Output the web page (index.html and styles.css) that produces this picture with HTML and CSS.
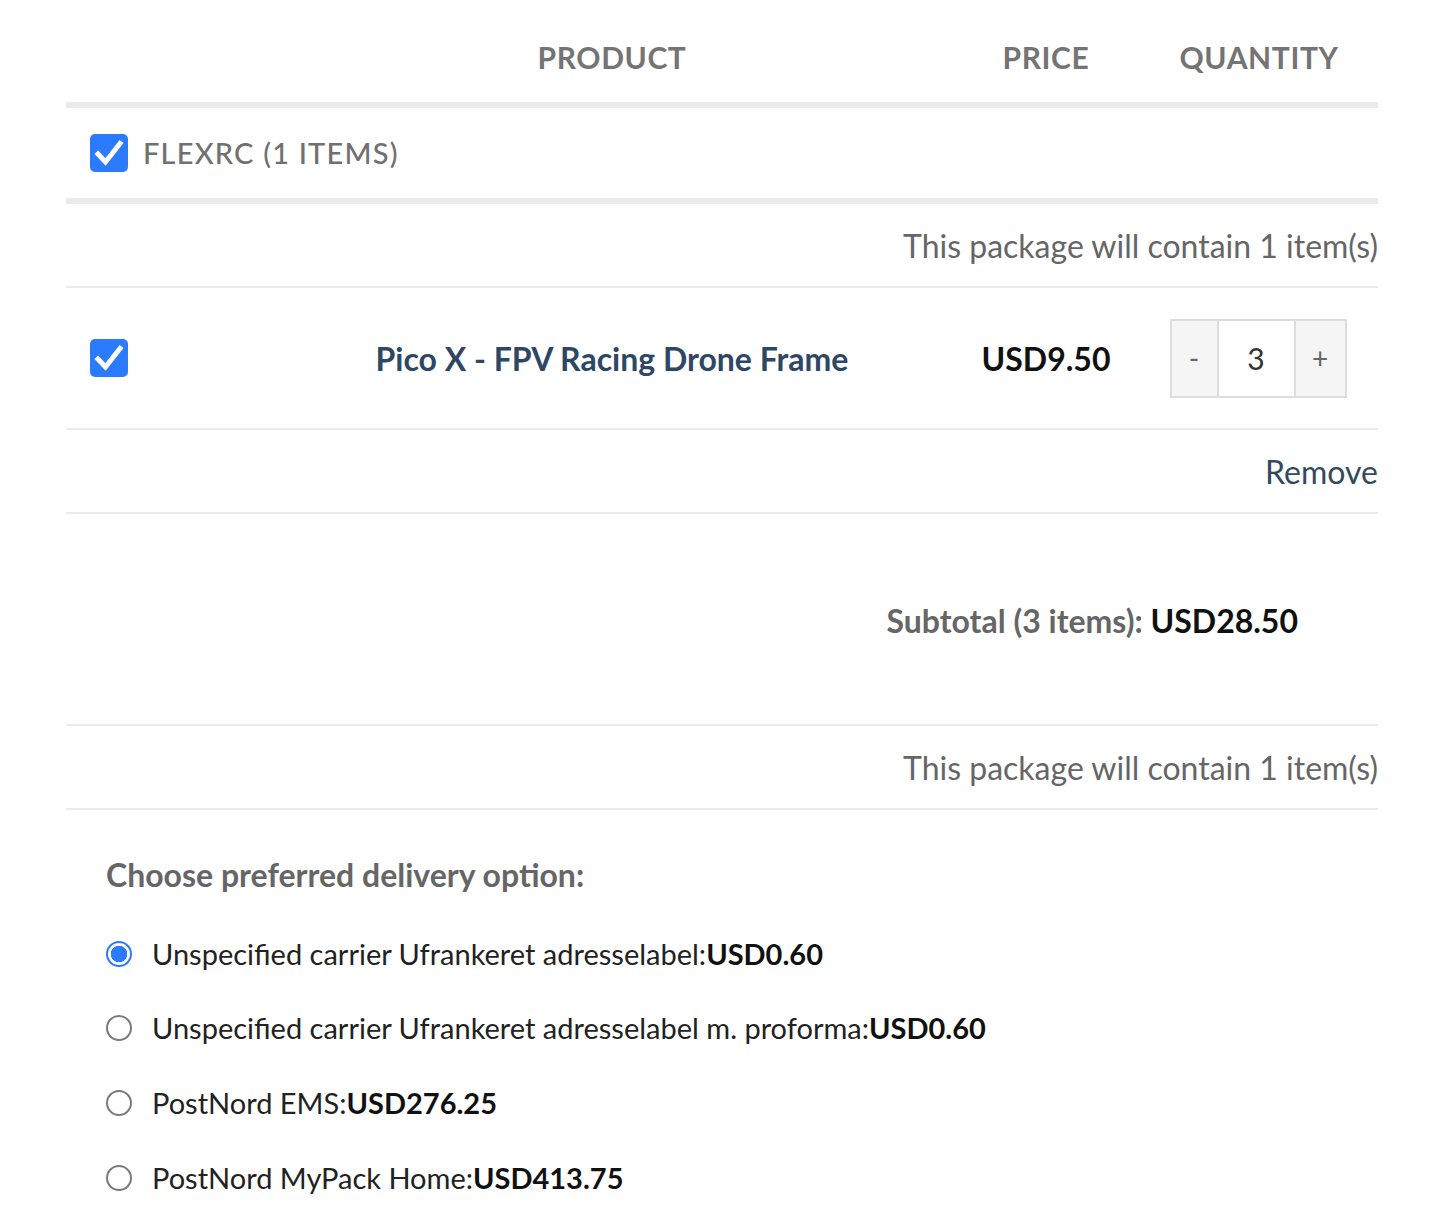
FILE: index.html
```html
<!DOCTYPE html>
<html lang="en">
<head>
<meta charset="utf-8">
<title>Cart</title>
<link rel="stylesheet" href="styles.css">
</head>
<body>
<div class="cart">
  <div class="grid head">
    <div></div>
    <div class="col-center">PRODUCT</div>
    <div class="col-center">PRICE</div>
    <div class="col-center">QUANTITY</div>
  </div>

  <div class="group">
    <span class="check">
      <svg viewBox="0 0 38 38" width="38" height="38"><rect x="0" y="0" width="38" height="38" rx="5" fill="#2a7bff"/><path d="M8 20 L15.5 28 L30 9.5" fill="none" stroke="#fff" stroke-width="5" stroke-linecap="square" stroke-linejoin="miter"/></svg>
    </span>
    <span class="group-name">FLEXRC (1 ITEMS)</span>
  </div>

  <div class="row-right pkg">This package will contain 1 item(s)</div>

  <div class="grid item">
    <div class="item-check">
      <span class="check">
        <svg viewBox="0 0 38 38" width="38" height="38"><rect x="0" y="0" width="38" height="38" rx="5" fill="#2a7bff"/><path d="M8 20 L15.5 28 L30 9.5" fill="none" stroke="#fff" stroke-width="5" stroke-linecap="square" stroke-linejoin="miter"/></svg>
      </span>
    </div>
    <div class="col-center name">Pico X - FPV Racing Drone Frame</div>
    <div class="col-center price">USD9.50</div>
    <div class="col-center">
      <div class="qty">
        <span class="qbtn">-</span>
        <span class="qval">3</span>
        <span class="qbtn qplus">+</span>
      </div>
    </div>
  </div>

  <div class="row-right remove">Remove</div>

  <div class="subtotal">
    <span class="sub-label">Subtotal (3 items): </span><span class="sub-val">USD28.50</span>
  </div>

  <div class="row-right pkg pkg2">This package will contain 1 item(s)</div>

  <div class="delivery">
    <div class="del-title">Choose preferred delivery option:</div>
    <div class="opt"><span class="radio on"></span><span>Unspecified carrier Ufrankeret adresselabel:<b>USD0.60</b></span></div>
    <div class="opt"><span class="radio"></span><span>Unspecified carrier Ufrankeret adresselabel m. proforma:<b>USD0.60</b></span></div>
    <div class="opt"><span class="radio"></span><span>PostNord EMS:<b>USD276.25</b></span></div>
    <div class="opt"><span class="radio"></span><span>PostNord MyPack Home:<b>USD413.75</b></span></div>
  </div>
</div>
</body>
</html>
```

FILE: styles.css
```css
* { box-sizing: border-box; }
html, body { margin: 0; padding: 0; background: #fff; }
body {
  font-family: Lato, "Open Sans", "Liberation Sans", sans-serif;
  color: #222;
}
.cart {
  margin-left: 66px;
  width: 1312px;
}
.grid {
  display: grid;
  grid-template-columns: 200px 692px 176px 244px;
  align-items: center;
}
.col-center { text-align: center; display: flex; justify-content: center; }
.head {
  height: 108px;
  padding-top: 39px;
  align-items: start;
  border-bottom: 6px solid #ebebeb;
  font-size: 30px;
  line-height: 36px;
  font-weight: 700;
  letter-spacing: 0.6px;
  color: #747474;
}
.head > div:nth-child(4) { padding-left: 6px; }
.group {
  height: 96px;
  display: flex;
  align-items: center;
  padding-left: 24px;
  border-bottom: 6px solid #ebebeb;
}
.check { display: inline-flex; width: 38px; height: 38px; }
.check svg { display: block; }
.group-name {
  margin-left: 15px;
  font-size: 29px;
  font-weight: 500;
  letter-spacing: 1.2px;
  color: #707070;
  line-height: 36px;
}
.row-right {
  display: flex;
  justify-content: flex-end;
  align-items: center;
  border-bottom: 2px solid #ebebeb;
}
.pkg {
  height: 84px;
  font-size: 32px;
  color: #666;
}
.item {
  height: 142px;
  border-bottom: 2px solid #ebebeb;
}
.item-check { padding-left: 24px; display: flex; }
.name {
  font-size: 32px;
  font-weight: 700;
  color: #2d4765;
}
.price {
  font-size: 32px;
  font-weight: 700;
  color: #111;
}
.qty {
  display: flex;
  height: 79px;
  border: 2px solid #dddddd;
  margin-left: 4px;
}
.qbtn {
  width: 45px;
  background: #f5f5f5;
  display: flex;
  align-items: center;
  justify-content: center;
  font-size: 28px;
  color: #666;
}
.qplus { width: 51px; border-left: 2px solid #dddddd; }
.qval {
  width: 77px;
  border-left: 2px solid #dddddd;
  background: #fff;
  display: flex;
  align-items: center;
  justify-content: center;
  font-size: 30px;
  color: #333;
}
.remove {
  height: 84px;
  font-size: 32px;
  color: #34495e;
}
.subtotal {
  height: 212px;
  display: flex;
  justify-content: flex-end;
  align-items: center;
  padding-right: 80px;
  padding-top: 2px;
  border-bottom: 2px solid #ebebeb;
  font-size: 32px;
  font-weight: 700;
}
.sub-label { color: #666; white-space: pre; }
.sub-val { color: #111; }
.pkg2 { height: 84px; }
.delivery {
  padding-left: 40px;
  padding-top: 46px;
}
.del-title {
  font-size: 32px;
  font-weight: 700;
  color: #666;
  line-height: 38px;
  margin-bottom: 21px;
}
.opt {
  display: flex;
  align-items: center;
  height: 75px;
  font-size: 29px;
  color: #222;
}
.opt:nth-child(2) { padding-top: 2px; }
.opt b { font-weight: 700; color: #111; }
.radio {
  width: 26px;
  height: 26px;
  border-radius: 50%;
  border: 2px solid #7a7a7a;
  margin-right: 20px;
  flex: none;
  background: #fff;
}
.radio.on {
  border: 2px solid #2a7bff;
  background: radial-gradient(circle, #2a7bff 0 8px, #fff 8.5px);
}
```
